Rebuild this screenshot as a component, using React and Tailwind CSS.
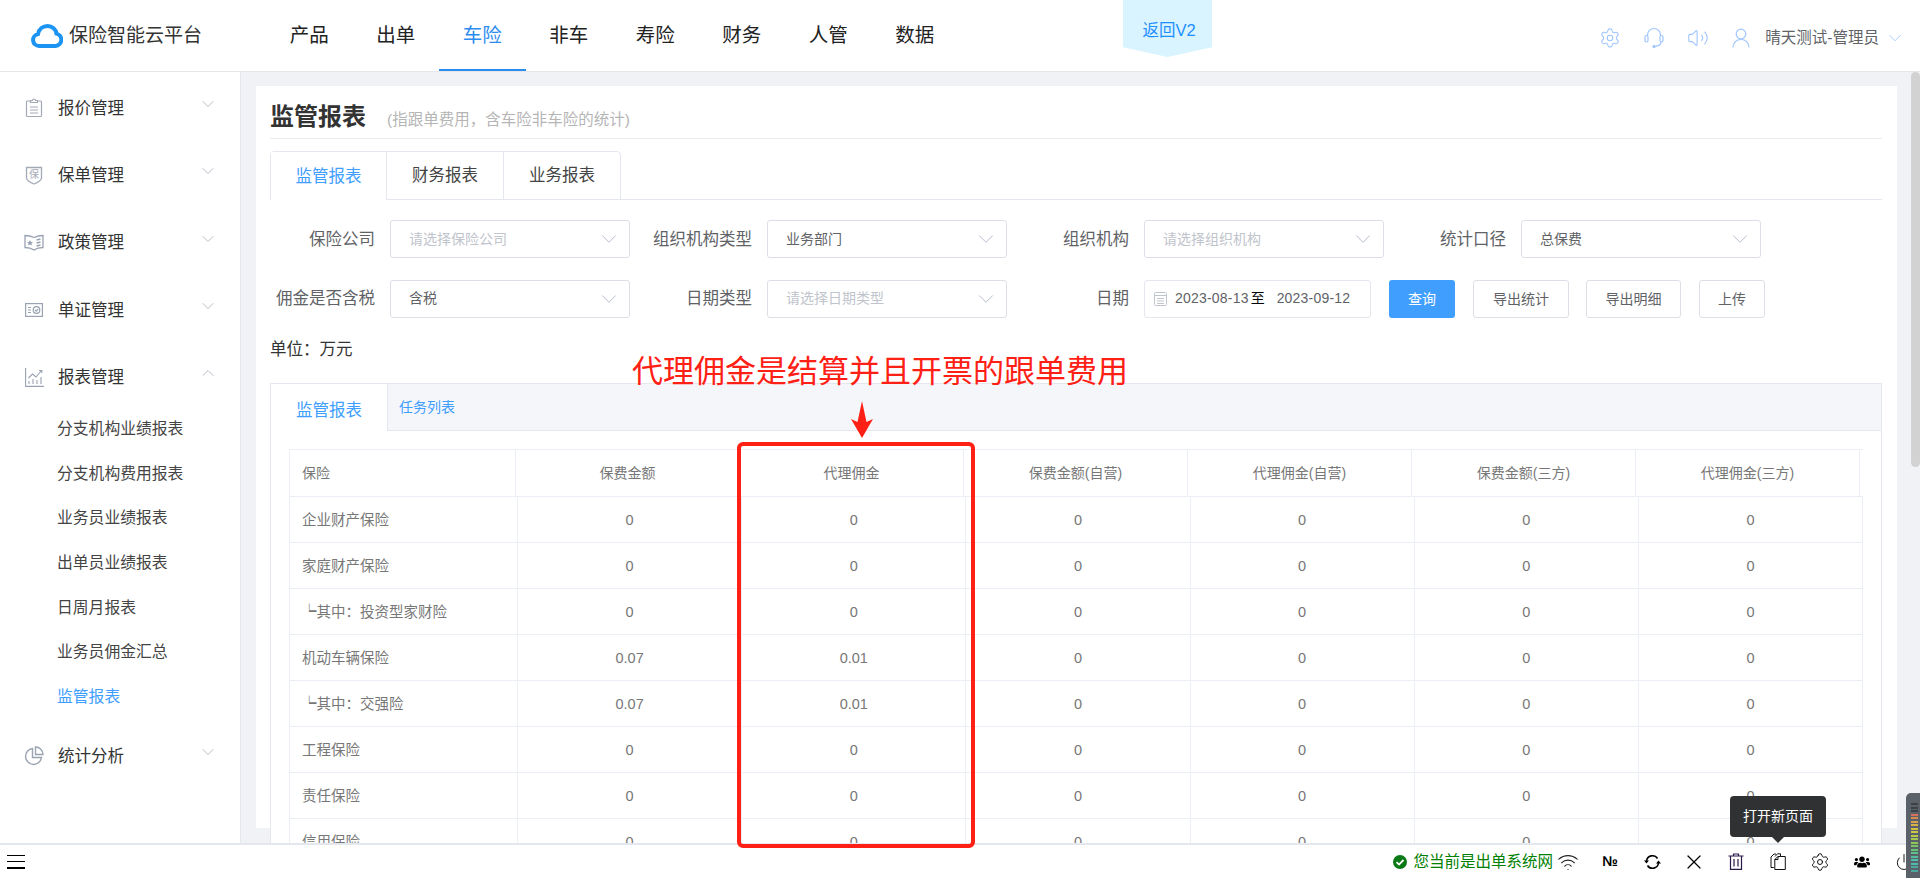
import { ChevronDown, ChevronUp, Settings, Volume2, X, Wifi, Power } from "lucide-react";
import { FaUsers } from "react-icons/fa";

const navItems = ["产品", "出单", "车险", "非车", "寿险", "财务", "人管", "数据"];
const subItems = ["分支机构业绩报表", "分支机构费用报表", "业务员业绩报表", "出单员业绩报表", "日周月报表", "业务员佣金汇总", "监管报表"];
const columns = ["保费金额", "代理佣金", "保费金额(自营)", "代理佣金(自营)", "保费金额(三方)", "代理佣金(三方)"];
const rows = [
  ["企业财产保险", "0", "0"],
  ["家庭财产保险", "0", "0"],
  ["┕其中\uFF1A投资型家财险", "0", "0"],
  ["机动车辆保险", "0.07", "0.01"],
  ["┕其中\uFF1A交强险", "0.07", "0.01"],
  ["工程保险", "0", "0"],
  ["责任保险", "0", "0"],
  ["信用保险", "0", "0"],
];
const meterColors = ["#3c4147", "#3c4147", "#3c4147", "#d9705a", "#d98a55", "#d9a04f", "#d6b04a", "#d4bf45", "#c9c745", "#b9c94a", "#a5c850", "#8fc65a", "#7ac466", "#68c274", "#5cc088", "#55bd9c", "#50bbae", "#50bbae", "#4aa89c", "#4aa89c"];

// sidebar icons
const QuoteIcon = () => (
  <svg width="18" height="20" viewBox="0 0 18 20" fill="none" stroke="#a3a9b5" strokeWidth="1.2">
    <path d="M5.5 3H2.5a1 1 0 0 0-1 1v13.5a1 1 0 0 0 1 1h13a1 1 0 0 0 1-1V4a1 1 0 0 0-1-1h-3" />
    <path d="M5.5 4.5V2.5h2a1.5 1.5 0 0 1 3 0h2v2z" />
    <path d="M5 9h8M5 12h8M5 15h8" />
  </svg>
);
const PolicyIcon = () => (
  <svg width="18" height="20" viewBox="0 0 18 20" fill="none" stroke="#a3a9b5" strokeWidth="1.3">
    <path d="M1.5 2.5h15v10.5c0 2.5-4 4.5-7.5 6-3.5-1.5-7.5-3.5-7.5-6z" />
    <text x="9" y="13" fontSize="10" textAnchor="middle" fill="#a3a9b5" stroke="none">保</text>
  </svg>
);
const RuleIcon = () => (
  <svg width="20" height="18" viewBox="0 0 20 18" fill="none" stroke="#9aa3b2" strokeWidth="1.3">
    <path d="M1 1.5c3 0 6 .5 9 2 3-1.500 6-2 9-2v12c-3 0-6 .5-9 2.500-3-2-6-2.500-9-2.500z" />
    <path d="M12.500 6l4-1M12.500 9l4-1M12.500 12l4-1" />
    <path d="M6 6l1 2 2 .2-1.500 1.400.5 2-2-1-2 1 .5-2L3 8.200 5 8z" fill="#9aa3b2" stroke="none" />
  </svg>
);
const VoucherIcon = () => (
  <svg width="18" height="14" viewBox="0 0 18 14" fill="none" stroke="#9aa3b2" strokeWidth="1.2">
    <rect x="0.6" y="0.6" width="16.8" height="12.8" />
    <path d="M3 4.5h3M3 7h3M3 9.5h3" />
    <circle cx="11.5" cy="7" r="3.3" />
    <path d="M10 7l1.200 1.200L13.200 6" />
  </svg>
);
const ReportIcon = () => (
  <svg width="19" height="19" viewBox="0 0 19 19" fill="none" stroke="#9aa3b2" strokeWidth="1.1">
    <path d="M.6 0v18.400H19" />
    <path d="M4 16v-3M8 16v-5M12 16v-4M16 16V9" />
    <path d="M3.5 10l4-4 3.500 3 5.500-6.500M14 2.500h2.800v2.500" />
  </svg>
);
const PieIcon = () => (
  <svg width="20" height="20" viewBox="0 0 20 20" fill="none" stroke="#9aa3b2" strokeWidth="1.4">
    <path d="M8.5 2.500a8 8 0 1 0 9 9h-9z" />
    <path d="M11.5 1a7.500 7.500 0 0 1 7.500 7.500h-7.500z" />
  </svg>
);

// header icons that the packages draw differently
const HeadsetIcon = () => (
  <svg width="20" height="22" viewBox="0 0 20 22" fill="none" stroke="#9fc5ff" strokeWidth="1.2">
    <path d="M3.5 9V8a6.500 6.500 0 0 1 13 0v1" />
    <rect x="1" y="8.500" width="3" height="6.500" rx="1.500" />
    <rect x="16" y="8.500" width="3" height="6.500" rx="1.500" />
    <path d="M17 15c0 2.500-2.500 4-6 4.300" />
    <circle cx="10" cy="19.500" r="1" fill="#9fc5ff" />
  </svg>
);
const UserIcon = () => (
  <svg width="18" height="20" viewBox="0 0 18 20" fill="none" stroke="#9fc5ff" strokeWidth="1.2">
    <circle cx="9" cy="6" r="4.800" />
    <path d="M1 19.500c0-4.500 3-8 8-8s8 3.500 8 8" />
  </svg>
);

function SideItem({ icon, label, open }) {
  return (
    <div className="h-[67.3px] flex items-center pl-[24px] pr-[22px] text-[16.5px] text-[#333]">
      <span className="w-[20px] flex justify-center">{icon}</span>
      <span className="ml-[14px]">{label}</span>
      <span className="ml-auto -translate-y-[4px] text-[#a9b0bc]">
        {open ? <ChevronUp size={20} strokeWidth={1} /> : <ChevronDown size={20} strokeWidth={1} />}
      </span>
    </div>
  );
}

function Select({ placeholder, value }) {
  return (
    <div className="w-[240px] h-[38px] border border-[#dcdfe6] rounded-[3px] flex items-center pl-[18px] pr-[7px] text-[14px] bg-white">
      <span className={value ? "text-[#606266]" : "text-[#c0c4cc]"}>{value || placeholder}</span>
      <ChevronDown size={26} strokeWidth={0.9} className="ml-auto text-[#b4bccc]" />
    </div>
  );
}

function FormItem({ label, children }) {
  return (
    <div className="w-[377px] flex items-center shrink-0">
      <label className="w-[105px] text-right text-[16.5px] text-[#606266] mr-[15px] whitespace-nowrap">{label}</label>
      {children}
    </div>
  );
}

function Btn({ children, className }) {
  return (
    <button className={`h-[38px] rounded-[3px] text-[14px] mt-[1px] ${className}`}>{children}</button>
  );
}

function BottomIcon({ children }) {
  return <span className="w-[42px] flex justify-center items-center text-black">{children}</span>;
}

function App() {
  return (
    <div className="relative h-[878px] w-[1920px] overflow-hidden flex flex-col bg-white font-['Liberation_Sans','Noto_Sans_CJK_SC',sans-serif]">
      {/* top bar */}
      <header className="h-[72px] shrink-0 flex items-center border-b border-[#e4e6e9] bg-white">
        <div className="w-[266px] flex items-center pl-[31px] pt-[1px]">
          <svg width="32" height="24" viewBox="0 0 32 24" fill="none" stroke="#1c94f4" strokeWidth="4">
            <path d="M8 22a6 6 0 0 1-1-11.900C8 5 12 2 16.500 2c4.800 0 8.500 3.300 9 7.600A6.300 6.300 0 0 1 24.500 22z" />
          </svg>
          <span className="ml-[6px] text-[19px] text-[#333] whitespace-nowrap">保险智能云平台</span>
        </div>
        <nav className="flex h-full">
          {navItems.map((item) => (
            <div
              key={item}
              className={`w-[86.5px] pt-[2px] flex items-center justify-center text-[19.5px] ${item === "车险" ? "text-[#2d8cf0] border-b-2 border-[#2d8cf0]" : "text-[#222] border-b-2 border-transparent"}`}
            >
              {item}
            </div>
          ))}
        </nav>
        <div className="ml-auto flex items-center pt-[4px] pr-[14px] text-[#9fc5ff]">
          <Settings size={22} strokeWidth={1.2} />
          <span className="ml-[23px]"><HeadsetIcon /></span>
          <Volume2 size={22} strokeWidth={1.2} className="ml-[23px]" />
          <span className="ml-[23px]"><UserIcon /></span>
          <span className="ml-[15px] text-[15.5px] text-[#606266] whitespace-nowrap">晴天测试-管理员</span>
          <ChevronDown size={22} strokeWidth={0.9} className="ml-[5px]" />
        </div>
      </header>

      <div className="flex-1 min-h-0 flex">
        {/* sidebar */}
        <aside className="w-[241px] shrink-0 border-r border-[#e4e7ed] pt-[2.5px] bg-white">
          <SideItem icon={<QuoteIcon />} label="报价管理" />
          <SideItem icon={<PolicyIcon />} label="保单管理" />
          <SideItem icon={<RuleIcon />} label="政策管理" />
          <SideItem icon={<VoucherIcon />} label="单证管理" />
          <SideItem icon={<ReportIcon />} label="报表管理" open />
          <div className="-mt-[4.5px] mb-[3px]">
            {subItems.map((s) => (
              <div key={s} className={`h-[44.7px] flex items-center pl-[57px] text-[15.8px] ${s === "监管报表" ? "text-[#409eff]" : "text-[#444]"}`}>
                {s}
              </div>
            ))}
          </div>
          <SideItem icon={<PieIcon />} label="统计分析" />
        </aside>

        {/* main */}
        <main className="w-[1667px] shrink-0 bg-[#f0f2f5] pl-[15px] pt-[14px] overflow-hidden">
          <div className="w-[1641px] h-[742px] bg-white pl-[14px] pr-[15px]">
            <div className="h-[53px] flex items-baseline pt-[16px] border-b border-[#e8eaec]">
              <h1 className="text-[24px] leading-[30px] font-bold text-[#333]">监管报表</h1>
              <span className="ml-[21px] text-[15.5px] text-[#b5b5b5]">{"(指跟单费用\uFF0C含车险非车险的统计)"}</span>
            </div>

            {/* tabs */}
            <div className="mt-[12px] h-[49px] flex border-b border-[#e4e7ed] text-[16.5px]">
              <div className="h-[49px] flex border border-[#e4e7ed] rounded-t-[4px] bg-white">
                <span className="w-[116px] flex items-center justify-center text-[#409eff] h-[48px] bg-white border-r border-[#e4e7ed]">监管报表</span>
                <span className="w-[117px] flex items-center justify-center text-[#444] border-r border-[#e4e7ed] h-[47px]">财务报表</span>
                <span className="w-[116px] flex items-center justify-center text-[#444] h-[47px]">业务报表</span>
              </div>
            </div>

            {/* filter */}
            <div className="mt-[20px] flex">
              <FormItem label="保险公司"><Select placeholder="请选择保险公司" /></FormItem>
              <FormItem label="组织机构类型"><Select value="业务部门" /></FormItem>
              <FormItem label="组织机构"><Select placeholder="请选择组织机构" /></FormItem>
              <FormItem label="统计口径"><Select value="总保费" /></FormItem>
            </div>
            <div className="mt-[21px] flex">
              <FormItem label="佣金是否含税"><Select value="含税" /></FormItem>
              <FormItem label="日期类型"><Select placeholder="请选择日期类型" /></FormItem>
              <div className="flex items-center">
                <label className="w-[105px] text-right text-[16.5px] text-[#606266] mr-[15px]">日期</label>
                <div className="w-[227px] h-[38px] border border-[#e4e7ed] rounded-[3px] flex items-center pl-[9px] text-[14px] text-[#606266] whitespace-nowrap">
                  <svg width="13" height="15" viewBox="0 0 13 15" fill="none" stroke="#c0c4cc" strokeWidth="1">
                    <rect x="0.5" y="1.5" width="12" height="13" rx="1" />
                    <path d="M.5 4.500h12M3 7.500h7M3 10h7M3 12.500h7" />
                  </svg>
                  <span className="ml-[8px] tracking-[.2px]">2023-08-13</span>
                  <span className="ml-[2px] text-black">至</span>
                  <span className="ml-[12px] tracking-[.2px]">2023-09-12</span>
                </div>
                <Btn className="w-[66px] ml-[18px] bg-[#409eff] text-white">查询</Btn>
                <Btn className="w-[96px] ml-[18px] border border-[#dcdfe6] text-[#606266]">导出统计</Btn>
                <Btn className="w-[95px] ml-[17px] border border-[#dcdfe6] text-[#606266]">导出明细</Btn>
                <Btn className="w-[66px] ml-[18px] border border-[#dcdfe6] text-[#606266]">上传</Btn>
              </div>
            </div>

            <div className="mt-[19px] text-[16.5px] leading-[24px] text-[#333]">{"单位\uFF1A万元"}</div>

            {/* report card */}
            <div className="mt-[22px] w-[1612px] h-[470px] bg-white border-t border-l border-r border-[#e4e7ed]">
              <div className="h-[47px] flex bg-[#f5f6fa] border-b border-[#e4e7ed]">
                <span className="w-[117px] h-[47px] flex items-center justify-center bg-white text-[#409eff] text-[16.5px] border-r border-[#e4e7ed] pt-[6px]">监管报表</span>
                <span className="ml-[11px] text-[14px] text-[#409eff] pt-[13px]">任务列表</span>
              </div>
              <div className="pt-[18px] pl-[18px]">
                <div className="w-[1574px] border-t border-l border-[#ebeef5]">
                  <div className="grid grid-cols-[226px_repeat(6,224px)] h-[47px] border-b border-[#ebeef5] text-[14px] text-[#777]">
                    <div className="flex items-center pl-[12px] border-r border-[#ebeef5]">保险</div>
                    {columns.map((c) => (
                      <div key={c} className="flex items-center justify-center border-r border-[#ebeef5]">{c}</div>
                    ))}
                  </div>
                  {rows.map((r) => (
                    <div key={r[0]} className="grid grid-cols-[228px_repeat(6,224.2px)] h-[46px] border-b border-[#ebeef5] text-[14.5px] text-[#777]">
                      <div className="flex items-center pl-[12px] pt-[2px] border-r border-[#ebeef5] whitespace-nowrap">{r[0]}</div>
                      {[r[1], r[2], "0", "0", "0", "0"].map((v, i) => (
                        <div key={i} className="flex items-center justify-center pt-[2px] border-r border-[#ebeef5]">{v}</div>
                      ))}
                    </div>
                  ))}
                </div>
              </div>
            </div>
          </div>
        </main>

        {/* page scrollbar */}
        <div className="w-[12px] shrink-0 bg-[#f0f2f5]">
          <div className="ml-[3px] w-[9px] h-[395px] rounded-[5px] bg-[#d2d2d2]" />
        </div>
      </div>

      {/* bottom bar */}
      <footer className="relative h-[35px] shrink-0 border-t-2 border-[#e4e7ed] bg-white flex items-center">
        <div className="ml-[7px] w-[18px] h-[14px] flex flex-col justify-between">
          <div className="h-[1.5px] bg-black" />
          <div className="h-[1.5px] bg-black" />
          <div className="h-[1.5px] bg-black" />
        </div>
        <div className="ml-auto flex items-center mr-[-5px]">
          <svg width="14" height="14" viewBox="0 0 14 14">
            <circle cx="7" cy="7" r="7" fill="#0b7a16" />
            <path d="M3.5 7.200l2.500 2.400 4.500-4.600" fill="none" stroke="#fff" strokeWidth="1.8" />
          </svg>
          <span className="ml-[6px] text-[15.5px] text-[#008000] whitespace-nowrap">您当前是出单系统网</span>
          <Wifi size={22} strokeWidth={1.2} className="ml-[4px] mr-[10px] text-[#222]" />
          <BottomIcon><span className="text-[14px] font-bold">№</span></BottomIcon>
          <BottomIcon>
            <svg width="17" height="16" viewBox="0 0 17 16" fill="none" stroke="#000" strokeWidth="1.6">
              <path d="M2.5 7a6 6 0 0 1 11-2.500M14.500 9a6 6 0 0 1-11 2.500" />
              <path d="M0 6.500h5L2.500 9.500zM17 9.500h-5l2.500-3z" fill="#000" stroke="none" />
            </svg>
          </BottomIcon>
          <BottomIcon><X size={24} strokeWidth={1.2} /></BottomIcon>
          <BottomIcon>
            <svg width="16" height="17" viewBox="0 0 16 17" fill="none" stroke="#2a1a4a" strokeWidth="1.2">
              <path d="M.5 3h15M5.5 3V1h5v2M2.500 3v13.400h11V3M6 6v7.500M10 6v7.500" />
            </svg>
          </BottomIcon>
          <BottomIcon>
            <svg width="16" height="17" viewBox="0 0 16 17" fill="none" stroke="#111" strokeWidth="1">
              <path d="M5 3.500L7.500.8h3v3M3.800 14.500H1V4l3-3h2" />
              <path d="M4.800 6.500l3-3h7.500v13H4.800z" />
              <path d="M8 3.500v3H4.800" />
            </svg>
          </BottomIcon>
          <BottomIcon><Settings size={20} strokeWidth={1.1} /></BottomIcon>
          <BottomIcon><FaUsers size={16} /></BottomIcon>
          <BottomIcon><Power size={18} strokeWidth={1.2} /></BottomIcon>
        </div>
      </footer>

      {/* return badge */}
      <div className="absolute left-[1123px] top-0 w-[89px] h-[57px] bg-[#d9f4ff] flex justify-center pt-[19px] pl-[3px] text-[16.5px] leading-[22px] text-[#1e8fff] [clip-path:polygon(0_0,100%_0,100%_83%,50%_100%,0_83%)]">
        返回V2
      </div>

      {/* red annotation */}
      <div className="absolute left-[632px] top-[354px] h-[32px] overflow-hidden text-[31px] leading-[36px] text-[#ff2015] whitespace-nowrap">
        代理佣金是结算并且开票的跟单费用
      </div>
      <svg className="absolute left-[851px] top-[401px]" width="22" height="37" viewBox="0 0 22 37">
        <path d="M11 0L15.5 21L22 18L11 37L0 18L6.5 21z" fill="#ff2015" />
      </svg>
      <div className="absolute left-[737px] top-[442px] w-[238px] h-[406px] border-[4px] border-[#ff2015] rounded-[6px]" />

      {/* tooltip */}
      <div className="absolute left-[1730px] top-[796px] w-[96px] h-[41px] rounded-[4px] bg-[#303133] text-white text-[14px] flex items-center justify-center">
        打开新页面
        <span className="absolute left-[42px] top-[41px] border-x-[6px] border-t-[6px] border-x-transparent border-t-[#303133]" />
      </div>

      {/* audio meter */}
      <div className="absolute left-[1906px] top-[793px] w-[14px] h-[85px] rounded-tl-[5px] bg-[#5b6168] pt-[10px] pl-[5px]">
        {meterColors.map((c, i) => (
          <div key={i} className="w-[7px] h-[2px] mb-[1.5px]" style={{ backgroundColor: c }} />
        ))}
      </div>
    </div>
  );
}

export default App;
